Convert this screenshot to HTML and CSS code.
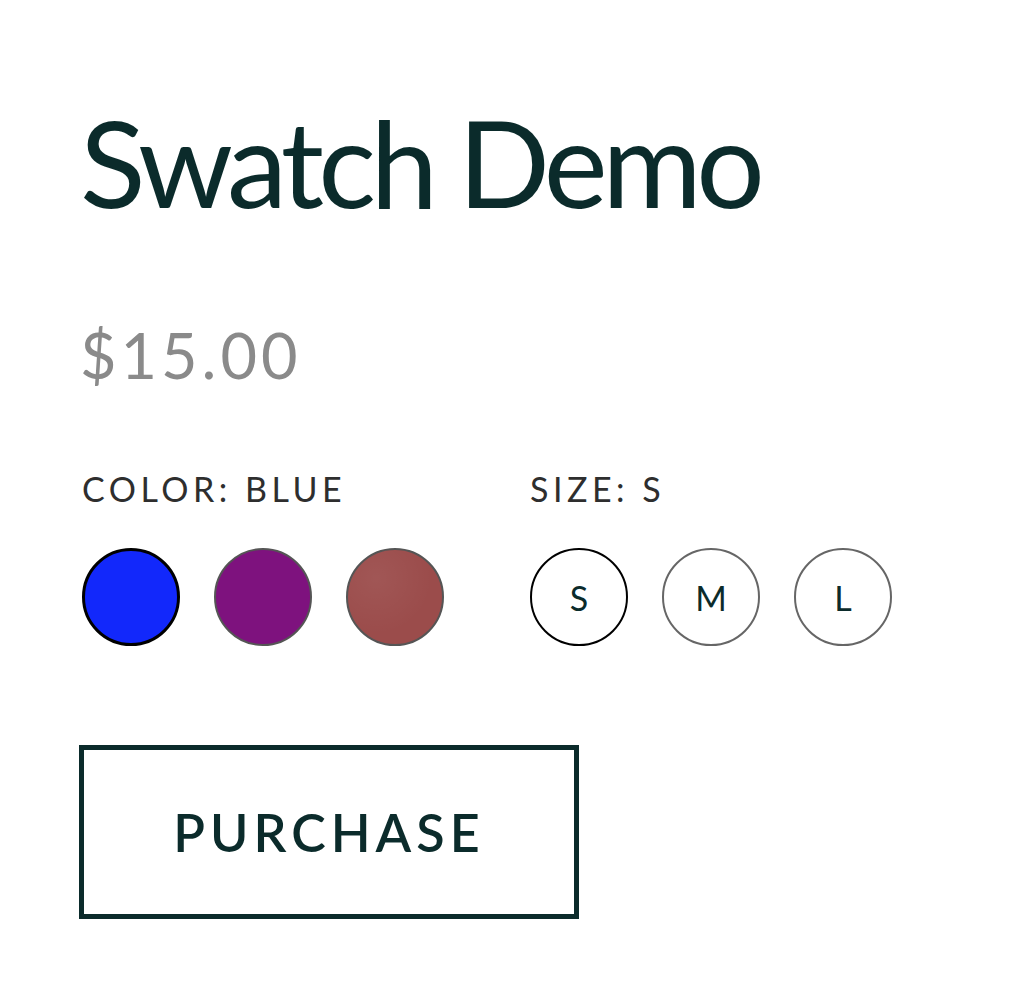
FILE: index.html
```html
<!DOCTYPE html>
<html lang="en">
<head>
    <meta charset="UTF-8">
    <meta name="viewport" content="width=device-width, initial-scale=1.0">
    <title>Swatch Demo</title>
    <link rel="stylesheet" href="styles.css">
</head>
<body>
    <div class="product">
        <h1 class="product-title">Swatch Demo</h1>
        <p class="product-price">$15.00</p>

        <div class="options">
            <div class="option-group">
                <div class="option-label">Color: Blue</div>
                <div class="swatches">
                    <span class="swatch swatch-blue selected"></span>
                    <span class="swatch swatch-purple"></span>
                    <span class="swatch swatch-brown"></span>
                </div>
            </div>
            <div class="option-group">
                <div class="option-label">Size: S</div>
                <div class="swatches">
                    <span class="size selected">S</span>
                    <span class="size">M</span>
                    <span class="size">L</span>
                </div>
            </div>
        </div>

        <button class="purchase">Purchase</button>
    </div>
</body>
</html>
```

FILE: styles.css
```css
body {
    margin: 0;
    background: #fff;
    font-family: Lato, "Open Sans", sans-serif;
    color: #0b2b2b;
}

.product {
    padding: 101px 0 0 80px;
}

.product-title {
    margin: 0;
    font-size: 121px;
    font-weight: 400;
    line-height: 1;
    letter-spacing: -5.5px;
    color: #0b2b2b;
}

.product-price {
    margin: 101px 0 0 0;
    font-size: 63px;
    line-height: 1;
    letter-spacing: 4px;
    color: #8a8a8a;
}

.options {
    display: flex;
    gap: 86px;
    margin-top: 86px;
    padding-left: 2px;
}

.option-label {
    font-size: 34px;
    line-height: 1;
    letter-spacing: 4.5px;
    text-transform: uppercase;
    color: #2e2e2e;
}

.swatches {
    display: flex;
    gap: 34px;
    margin-top: 42px;
}

.swatch,
.size {
    width: 98px;
    height: 98px;
    border-radius: 50%;
    box-sizing: border-box;
    display: flex;
    align-items: center;
    justify-content: center;
}

.swatch {
    border: 2px solid #555;
}

.swatch.selected {
    border: 3px solid #000;
}

.swatch-blue { background: #1228fb; }
.swatch-purple { background: #7e127e; }
.swatch-brown {
    background: #9b4c4b;
    background-image: radial-gradient(circle at 30% 30%, rgba(255,255,255,0.06), transparent 60%);
}

.size {
    border: 2px solid #666;
    font-size: 34px;
    color: #0b2b2b;
}

.size.selected {
    border-color: #000;
}

.purchase {
    margin-top: 99px;
    margin-left: -1px;
    width: 500px;
    height: 174px;
    background: #fff;
    border: 5px solid #0b2b2b;
    font-family: Lato, "Open Sans", sans-serif;
    font-size: 52px;
    font-weight: 600;
    letter-spacing: 5px;
    text-transform: uppercase;
    color: #0b2b2b;
    cursor: pointer;
}
```
